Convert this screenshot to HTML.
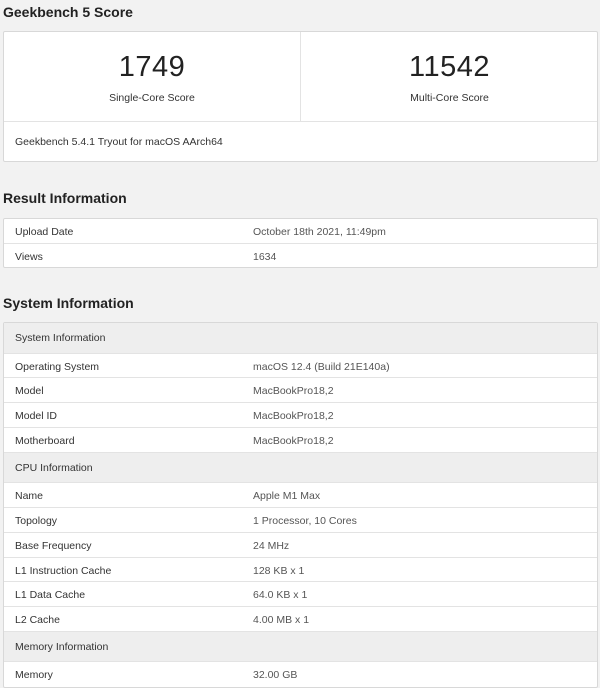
<!DOCTYPE html>
<html><head><style>
*{margin:0;padding:0;box-sizing:border-box}
body{width:600px;height:688px;background:#f2f2f2;font-family:"Liberation Sans",Arial,sans-serif;color:#333;position:relative;overflow:hidden}
h2{position:absolute;left:3px;font-size:14px;font-weight:bold;color:#222}
.card{position:absolute;left:3px;width:595px;background:#fff;border:1px solid #d8d8d8;border-radius:2px}
.score{position:absolute;top:0;height:90px;width:297px;text-align:center}
.num{font-size:29px;margin-top:18px;color:#222;line-height:34px;letter-spacing:0.5px}
.lbl{font-size:10.5px;margin-top:8px;color:#333}
.row{height:24.8px;border-bottom:1px solid #e3e3e3;font-size:10.5px;line-height:26px;position:relative}
.row:last-child{border-bottom:none}
.row span{position:absolute;left:11px}
.row b{position:absolute;left:249px;font-weight:normal;color:#555}
.hd{height:30.5px;line-height:31px;background:#eeeeee;border-bottom:1px solid #e3e3e3}
</style></head><body>
<h2 style="top:4px">Geekbench 5 Score</h2>
<div class="card" style="top:31px;height:131px">
 <div class="score" style="left:0;border-right:1px solid #e3e3e3"><div class="num">1749</div><div class="lbl">Single-Core Score</div></div>
 <div class="score" style="left:297px"><div class="num">11542</div><div class="lbl">Multi-Core Score</div></div>
 <div style="position:absolute;top:89px;left:0;right:0;border-top:1px solid #e3e3e3;height:41px;line-height:40px;font-size:10.5px;padding-left:11px">Geekbench 5.4.1 Tryout for macOS AArch64</div>
</div>
<h2 style="top:190px">Result Information</h2>
<div class="card" style="top:218px;height:50px">
 <div class="row"><span>Upload Date</span><b>October 18th 2021, 11:49pm</b></div>
 <div class="row"><span>Views</span><b>1634</b></div>
</div>
<h2 style="top:295px">System Information</h2>
<div class="card" style="top:322px;height:366px">
 <div class="row hd"><span>System Information</span></div>
 <div class="row"><span>Operating System</span><b>macOS 12.4 (Build 21E140a)</b></div>
 <div class="row"><span>Model</span><b>MacBookPro18,2</b></div>
 <div class="row"><span>Model ID</span><b>MacBookPro18,2</b></div>
 <div class="row"><span>Motherboard</span><b>MacBookPro18,2</b></div>
 <div class="row hd"><span>CPU Information</span></div>
 <div class="row"><span>Name</span><b>Apple M1 Max</b></div>
 <div class="row"><span>Topology</span><b>1 Processor, 10 Cores</b></div>
 <div class="row"><span>Base Frequency</span><b>24 MHz</b></div>
 <div class="row"><span>L1 Instruction Cache</span><b>128 KB x 1</b></div>
 <div class="row"><span>L1 Data Cache</span><b>64.0 KB x 1</b></div>
 <div class="row"><span>L2 Cache</span><b>4.00 MB x 1</b></div>
 <div class="row hd"><span>Memory Information</span></div>
 <div class="row"><span>Memory</span><b>32.00 GB</b></div>
</div>
</body></html>
